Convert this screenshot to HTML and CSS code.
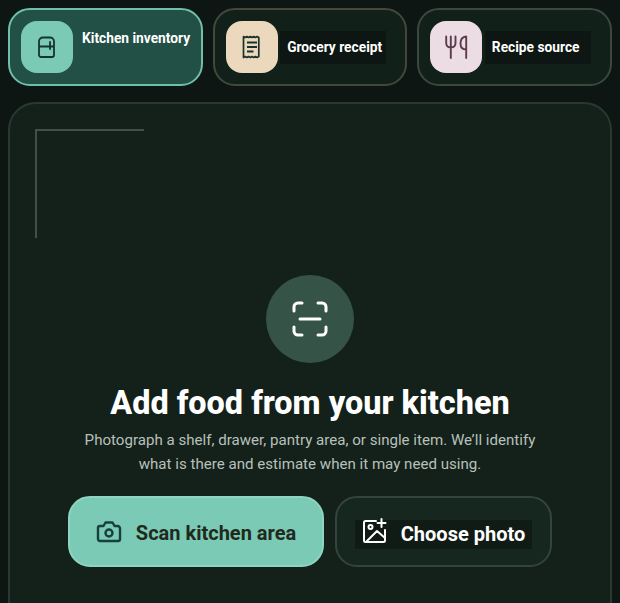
FILE: index.html
```html
<!DOCTYPE html>
<html lang="en">
<head>
<meta charset="utf-8">
<title>Add food</title>
<link rel="stylesheet" href="styles.css">
</head>
<body>
<main class="page">
  <nav class="tabs">
    <button class="tab tab-active">
      <span class="tile tile-mint">
        <svg class="tile-icon" viewBox="0 0 24 24" fill="none" stroke="#17332c" stroke-width="1.8" stroke-linecap="round" stroke-linejoin="round"><path d="M8 2.500h7a4 4 0 0 1 4 4V20a2 2 0 0 1-2 2H6a2 2 0 0 1-2-2V6.500a4 4 0 0 1 4-4zM4 11.500h15M15 7v7"/></svg>
      </span>
      <span class="label label-top">Kitchen inventory</span>
    </button>
    <button class="tab tab-warm">
      <span class="tile tile-sand">
        <svg class="tile-icon" viewBox="0 0 24 24" fill="none" stroke="#17332c" stroke-width="2" stroke-linejoin="round"><path d="M3.500 1.500l1.700 1 1.700-1 1.700 1 1.700-1 1.700 1 1.700-1 1.700 1 1.700-1 1.700 1v19l-1.700 1-1.700-1-1.700 1-1.700-1-1.700 1-1.700-1-1.700 1-1.700-1-1.700 1z" stroke-width="1.700"/><path d="M7 7.500h10M7 12h10M7 16.500h6.500"/></svg>
      </span>
      <span class="label">Grocery receipt</span>
    </button>
    <button class="tab">
      <span class="tile tile-rose">
        <svg class="tile-icon-large" viewBox="0 0 28 28" fill="none" stroke="#5e3b4c" stroke-width="1.900" stroke-linecap="round" stroke-linejoin="round"><path d="M4.200 3.500V10c0 3 1.800 4.500 4.600 4.500s4.700-1.500 4.700-4.500V3.500M8.800 3.500v21.500M24.200 25V3.500c-3.500.3-5.700 3-5.700 7 0 3.500 2 6 5.700 6"/></svg>
      </span>
      <span class="label">Recipe source</span>
    </button>
  </nav>

  <section class="panel">
    <span class="corner"></span>
    <div class="scan-circle">
      <svg viewBox="0 0 36 36" width="36" height="36" fill="none" stroke="#fff" stroke-width="3" stroke-linecap="round" stroke-linejoin="round"><path d="M2 10V6a4 4 0 0 1 4-4h4M26 2h4a4 4 0 0 1 4 4v4M34 26v4a4 4 0 0 1-4 4h-4M10 34H6a4 4 0 0 1-4-4v-4M8 18h20"/></svg>
    </div>
    <h1 class="title">Add food from your kitchen</h1>
    <p class="intro">Photograph a shelf, drawer, pantry area, or single item. We’ll identify what is there and estimate when it may need using.</p>
    <div class="actions">
      <button class="btn btn-primary">
        <svg viewBox="0 0 26 24" width="26" height="24" fill="none" stroke="#17403a" stroke-width="2.400" stroke-linecap="round" stroke-linejoin="round"><path d="M4 6h3.500l2-3.500h7l2 3.500H22a3 3 0 0 1 2 2v11a2 2 0 0 1-2 2H4a2 2 0 0 1-2-2V8a2 2 0 0 1 2-2z"/><circle cx="13" cy="13" r="3.500"/></svg>
        <span class="btn-text">Scan kitchen area</span>
      </button>
      <button class="btn btn-secondary">
        <span class="btn-inner">
          <svg class="btn-inner-icon" viewBox="0 0 26 26" width="26" height="26" fill="none" stroke="#fff" stroke-width="2" stroke-linecap="round" stroke-linejoin="round"><path d="M14 3H3.500A1.500 1.500 0 0 0 2 4.500v18A1.500 1.500 0 0 0 3.500 24h18a1.500 1.500 0 0 0 1.500-1.500V12M19.500 1v8M15.500 5h8M4 24l11-11 8 7"/><circle cx="8.500" cy="9" r="2"/></svg>
          <span>Choose photo</span>
        </span>
      </button>
    </div>
  </section>
</main>
</body>
</html>
```

FILE: styles.css
```css
* { box-sizing: border-box; }
html, body { margin: 0; height: 603px; overflow: hidden; }
body { background: #0d1612; font-family: Roboto, "Liberation Sans", sans-serif; color: #fff; }
.page { padding: 8px; display: flex; flex-direction: column; gap: 16px; }
button { font: inherit; color: inherit; cursor: pointer; }

.tabs { display: grid; grid-template-columns: repeat(3, 1fr); gap: 10px; }
.tab { height: 78px; padding: 11px; display: flex; align-items: center; gap: 2.5px; background: #12201a; border: 2px solid #3c4740; border-radius: 22px; text-align: left; }
.tab-warm { border-color: #43483b; }
.tab-active { background: #225046; border-color: #6fbfa9; gap: 9px; }
.tile { width: 52px; height: 52px; flex: none; border-radius: 16px; display: flex; align-items: center; justify-content: center; }
.tile-mint { background: #7bcab5; }
.tile-sand { background: #ecd9bd; }
.tile-rose { background: #ecdde4; }
.tile-icon { width: 24px; height: 24px; }
.tile-icon-large { width: 28px; height: 28px; }
.label { width: 106px; flex: none; white-space: nowrap; font-size: 13.75px; font-weight: 700; line-height: 33px; padding-left: 7px; background: #0d1612; }
.label-top { align-self: flex-start; line-height: 20px; padding-left: 0; background: none; margin-top: 7px; }

.panel { position: relative; height: 640px; padding-top: 171px; background: #14201a; border: 2px solid #2b3831; border-radius: 28px; display: flex; flex-direction: column; align-items: center; }
.corner { position: absolute; left: 25px; top: 25px; width: 109px; height: 109px; border-top: 2px solid #404f47; border-left: 2px solid #404f47; }
.scan-circle { width: 88px; height: 88px; border-radius: 50%; background: #355447; display: flex; align-items: center; justify-content: center; }
.title { margin: 18px 0 0; font-size: 32.4px; line-height: 44px; font-weight: 800; letter-spacing: 0; }
.intro { margin: 3px 0 0; width: 470px; text-align: center; font-size: 15.1px; line-height: 24px; color: #b8c0bb; }
.actions { margin-top: 20px; display: flex; gap: 11px; }
.btn { height: 71px; display: flex; align-items: center; justify-content: center; font-size: 20px; font-weight: 700; border-radius: 22px; }
.btn-primary { width: 256px; gap: 14px; background: #7bcab5; border: 2px solid #8ed5c1; color: #21291c; }
.btn-text { padding-top: 3px; }
.btn-secondary { width: 217px; background: #162720; border: 2px solid #35443c; }
.btn-inner { display: flex; align-items: center; gap: 13px; height: 29px; margin-top: 5px; padding: 0 7px; background: #101b16; }
.btn-inner-icon { margin-top: -6px; }
```
